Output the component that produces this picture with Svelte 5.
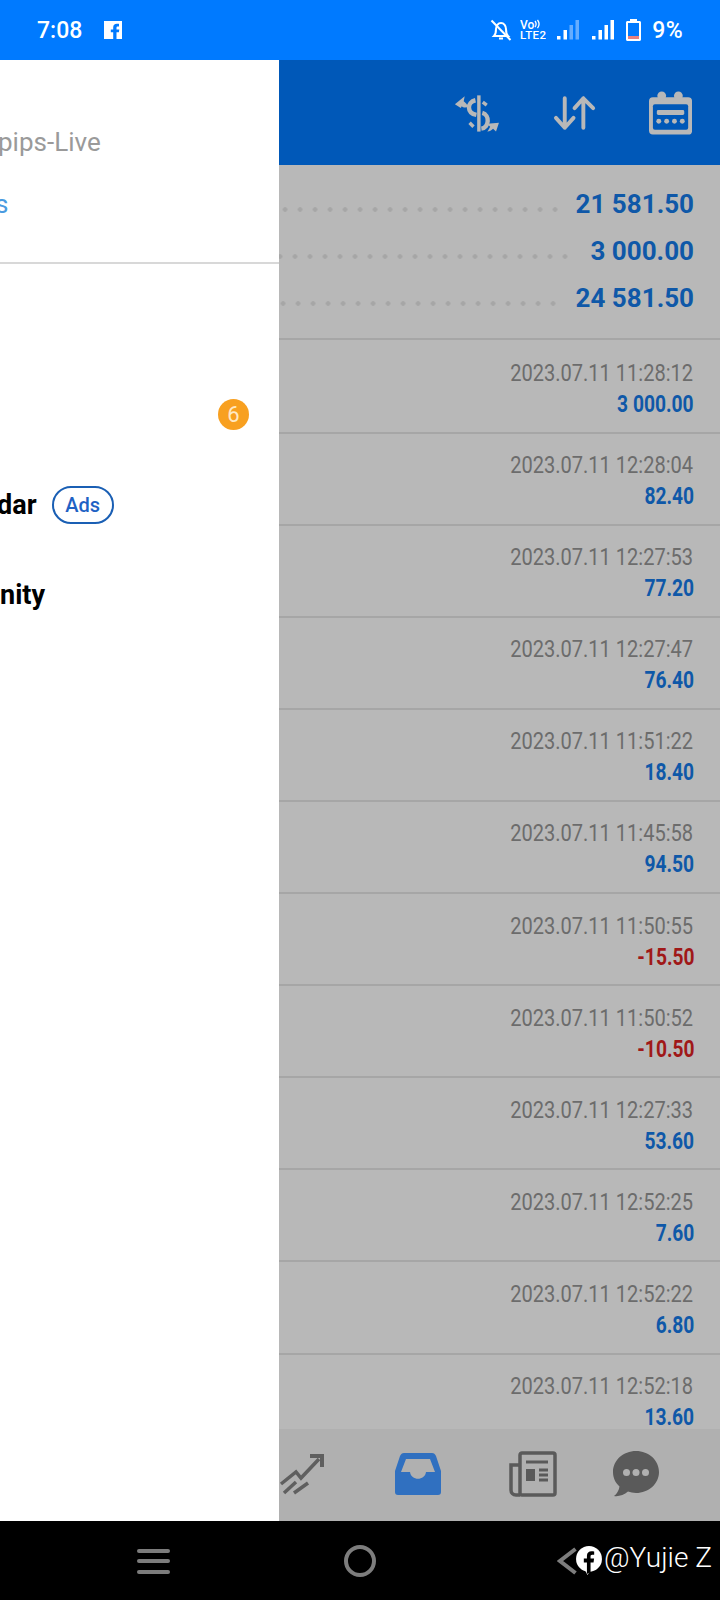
<script lang="ts">
	const summary = [
		{ value: "21 581.50", gap: 13 },
		{ value: "3 000.00", gap: 18 },
		{ value: "24 581.50", gap: 15 }
	];

	const deals = [
		{ time: "2023.07.11 11:28:12", amount: "3 000.00" },
		{ time: "2023.07.11 12:28:04", amount: "82.40" },
		{ time: "2023.07.11 12:27:53", amount: "77.20" },
		{ time: "2023.07.11 12:27:47", amount: "76.40" },
		{ time: "2023.07.11 11:51:22", amount: "18.40" },
		{ time: "2023.07.11 11:45:58", amount: "94.50" },
		{ time: "2023.07.11 11:50:55", amount: "-15.50", loss: true },
		{ time: "2023.07.11 11:50:52", amount: "-10.50", loss: true },
		{ time: "2023.07.11 12:27:33", amount: "53.60" },
		{ time: "2023.07.11 12:52:25", amount: "7.60" },
		{ time: "2023.07.11 12:52:22", amount: "6.80" },
		{ time: "2023.07.11 12:52:18", amount: "13.60" }
	];
</script>

<div class="screen">
	<header class="status">
		<span class="clock">7:08</span>
		<svg class="fb-square" width="18" height="18" viewBox="0 0 18 18">
			<path fill="#fff" d="M0 0h18v18h-5.500v-6.800h2.400l.4-2.800h-2.800V6.700c0-.8.3-1.300 1.400-1.300H15V2.900c-.3 0-1.200-.1-2.200-.1-2.200 0-3.600 1.300-3.600 3.700v1.900H6.800v2.800h2.400V18H0z" />
		</svg>
		<span class="spacer"></span>
		<svg width="22" height="22" viewBox="0 0 22 22" fill="none" stroke="#fff" stroke-width="2">
			<path d="M4 17c2-2 2-4 2-7 0-3 2-6 5-6s5 3 5 6c0 3 0 5 2 7z" />
			<path d="M9 19.500h4" />
			<path d="M1.500 1.500 20.500 21" />
		</svg>
		<svg class="volte" width="26" height="22" viewBox="0 0 26 22">
			<text x="0" y="9.500" class="volte-top">Vo</text>
			<path d="M15 2a5 5 0 0 1 0 6M17.500 .8a7 7 0 0 1 0 8.400" fill="none" stroke="#fff" stroke-width="1.300" />
			<text x="0" y="20" class="volte-bottom">LTE2</text>
		</svg>
		<svg class="sig-a" width="22" height="20" viewBox="0 0 22 20">
			<rect x="0" y="16" width="3.500" height="3.500" fill="#fff" />
			<rect x="6.500" y="10" width="3.500" height="9.500" fill="#fff" />
			<rect x="12.500" y="5" width="3.500" height="14.500" fill="#66adff" />
			<rect x="18.500" y="0" width="3.500" height="19.500" fill="#66adff" />
		</svg>
		<svg class="sig-b" width="22" height="20" viewBox="0 0 22 20" fill="#fff">
			<rect x="0" y="16" width="3.500" height="3.500" />
			<rect x="6.500" y="10" width="3.500" height="9.500" />
			<rect x="12.500" y="5" width="3.500" height="14.500" />
			<rect x="18.500" y="0" width="3.500" height="19.500" />
		</svg>
		<svg class="battery" width="15" height="22" viewBox="0 0 15 22">
			<path fill="#fff" d="M4 0h7v2h2.500c.8 0 1.500.7 1.500 1.500v17c0 .8-.7 1.500-1.500 1.500h-12C.7 22 0 21.300 0 20.500v-17C0 2.700.7 2 1.500 2H4z" />
			<rect x="2" y="4" width="11" height="13" fill="#007aff" />
			<rect x="2" y="17" width="11" height="3" fill="#e88080" />
		</svg>
		<span class="percent">9%</span>
	</header>

	<div class="body">
		<aside class="drawer">
			<div class="account">
				<div class="server">pips-Live</div>
				<div class="link">s</div>
			</div>
			<nav class="menu">
				<div class="item badge-row"><span class="badge">6</span></div>
				<div class="item">
					<span class="label">dar</span>
					<span class="ads">Ads</span>
				</div>
				<div class="item"><span class="label wide">nity</span></div>
			</nav>
		</aside>

		<main class="page">
			<div class="toolbar">
				<svg class="tool-a" width="56" height="50" viewBox="0 0 56 50" fill="none" stroke="#b8b8b8">
					<path d="M29.500 8v37" stroke-width="3.500" />
					<path d="M26 13c-9 2-9 13 1 15" stroke-width="4.500" />
					<path d="M33.500 15l4 3" stroke-width="3.500" />
					<path d="M33 26c8 2 7 15-1 16" stroke-width="4.500" />
					<path d="M20 36l4 4" stroke-width="3.500" />
					<path fill="#b8b8b8" stroke="none" d="M5 17 15 9l-1 5c2 2 4 3 4 6-3 1-5 0-6-1l-1 2z" />
					<path fill="#b8b8b8" stroke="none" d="M50 36l-12 1 3 3c-1 2-2 4-3 5 3 0 5-2 6-3l3 3z" />
				</svg>
				<svg class="tool-b" width="44" height="36" viewBox="0 0 44 36" fill="none" stroke="#b8b8b8" stroke-width="4" stroke-linecap="round" stroke-linejoin="round">
					<path d="M12 3v30M3 23l9 10 9-10" />
					<path d="M31 33V3M22 13l9-10 10 10" />
				</svg>
				<svg class="tool-c" width="44" height="44" viewBox="0 0 44 44">
					<rect x="0" y="6" width="44" height="38" rx="4" fill="#b8b8b8" />
					<rect x="4" y="13" width="36" height="26" rx="2" fill="#0058b8" />
					<circle cx="13" cy="4.500" r="4.500" fill="#b8b8b8" />
					<circle cx="30" cy="4.500" r="4.500" fill="#b8b8b8" />
					<rect x="8" y="19" width="28" height="5" rx="1.500" fill="#b8b8b8" />
					<circle cx="10" cy="30.500" r="2.500" fill="#b8b8b8" />
					<circle cx="18" cy="30.500" r="2.500" fill="#b8b8b8" />
					<circle cx="26" cy="30.500" r="2.500" fill="#b8b8b8" />
					<circle cx="34" cy="30.500" r="2.500" fill="#b8b8b8" />
				</svg>
			</div>

			<section class="summary">
				{#each summary as line}
					<div class="sum-line">
						<span class="dots"></span>
						<span class="sum-value" style="margin-left: {line.gap}px">{line.value}</span>
					</div>
				{/each}
			</section>

			<section class="deals">
				{#each deals as deal}
					<div class="deal">
						<span class="time">{deal.time}</span>
						<span class="amount" class:loss={deal.loss}>{deal.amount}</span>
					</div>
				{/each}
			</section>

			<footer class="tabs">
				<svg class="tab-chart" width="56" height="56" viewBox="0 0 56 56" fill="none" stroke="#5f5f5f" stroke-width="3.500">
					<path d="M5 38 20 26l5 6 18-19" />
					<path d="M34 10h12v11" stroke-width="4" />
					<path d="M8 47l12-11M18 47l14-10" />
				</svg>
				<svg class="tab-inbox" width="46" height="42" viewBox="0 0 46 42">
					<path fill="#3070c0" fill-rule="evenodd" d="M9 0h28c2 0 3 1 4 3l5 15v21c0 2-1 3-3 3H3c-2 0-3-1-3-3V18L5 3c1-2 2-3 4-3zm2 6L6 19h9c1 9 15 9 16 0h9L35 6z" />
				</svg>
				<svg class="tab-news" width="48" height="46" viewBox="0 0 48 46" fill="none" stroke="#5a5a5a" stroke-width="3.500">
					<rect x="11" y="2" width="35" height="42" rx="2" />
					<path d="M11 44H7c-3 0-5-2-5-5V14h8" />
					<path d="M17 11h22" stroke-width="3" />
					<rect x="18" y="19" width="7" height="10" fill="#5a5a5a" stroke-width="2" />
					<path d="M30 19h9M30 24h9M30 29h9" stroke-width="3" />
				</svg>
				<svg class="tab-chat" width="46" height="46" viewBox="0 0 46 46">
					<path fill="#5a5a5a" d="M23 0c12.700 0 23 9.300 23 21s-10.300 21-23 21c-3 0-5.500-.5-8-1.400C11 44 5 46 1 45c3-2 5-6 5.500-9.500C2.500 32 0 27 0 21 0 9.300 10.300 0 23 0z" />
					<circle cx="13.500" cy="21.500" r="3.500" fill="#b0b0b0" />
					<circle cx="23" cy="21.500" r="3.500" fill="#b0b0b0" />
					<circle cx="32.500" cy="21.500" r="3.500" fill="#b0b0b0" />
				</svg>
			</footer>
		</main>
	</div>

	<footer class="nav">
		<span class="burger"><i></i><i></i><i></i></span>
		<span class="home"></span>
		<svg class="back" width="20" height="28" viewBox="0 0 20 28" fill="none" stroke="#7d7d7d" stroke-width="4">
			<path d="M18.500 2 3 14l15.500 12" />
		</svg>
		<svg class="fb-round" width="26" height="29" viewBox="0 0 25 28">
			<circle cx="12.500" cy="12.500" r="12.500" fill="#fff" />
			<path fill="#fff" d="M8 22l3 6 4-6z" />
			<path fill="#000" d="M10.500 27v-11H7.500v-4h3V9.500c0-3 1.800-4.500 4.400-4.500 1.200 0 2.200.1 2.600.2v3.300h-1.900c-1.300 0-1.600.7-1.600 1.600V12h3.400l-.5 4h-2.900v9z" />
		</svg>
		<span class="credit">@Yujie Z</span>
	</footer>
</div>

<style>
	:global(body) {
		margin: 0;
	}

	.screen {
		width: 720px;
		height: 1600px;
		display: flex;
		flex-direction: column;
		overflow: hidden;
		font-family: Roboto, "Liberation Sans", sans-serif;
		background: #b8b8b8;
	}

	.status {
		height: 60px;
		flex: none;
		display: flex;
		align-items: center;
		padding: 0 37px 0 37px;
		background: #007aff;
		color: #fff;
		font-size: 23px;
		font-weight: 500;
	}

	.fb-square {
		margin-left: 22px;
		margin-bottom: 1px;
	}

	.spacer {
		flex: 1;
	}

	.volte {
		margin-left: 8px;
	}

	.volte-top {
		font: 500 12px Roboto, sans-serif;
		fill: #fff;
	}

	.volte-bottom {
		font: 500 11.500px Roboto, sans-serif;
		letter-spacing: 0.4px;
		fill: #fff;
	}

	.sig-a {
		margin-left: 11px;
	}

	.sig-b {
		margin-left: 13px;
	}

	.battery {
		margin-left: 12px;
	}

	.percent {
		margin-left: 11px;
		letter-spacing: 0.4px;
	}

	.body {
		flex: 1;
		display: flex;
		min-height: 0;
	}

	.drawer {
		width: 279px;
		flex: none;
		background: #fff;
		overflow: hidden;
	}

	.account {
		height: 204px;
		box-sizing: border-box;
		padding-top: 65px;
		border-bottom: 2px solid #d8d8d8;
		font-size: 26px;
		line-height: 34px;
	}

	.server {
		color: #9a9a9a;
		margin-left: -2px;
	}

	.link {
		color: #4a9be0;
		margin-top: 28px;
		margin-left: -5px;
	}

	.menu {
		padding-top: 105px;
	}

	.item {
		height: 90.500px;
		display: flex;
		align-items: center;
	}

	.badge-row {
		justify-content: flex-end;
		padding-right: 30px;
	}

	.badge {
		width: 31px;
		height: 31px;
		border-radius: 50%;
		background: #f8a020;
		color: #ffe9c4;
		font-size: 22px;
		line-height: 31px;
		text-align: center;
	}

	.label {
		font-size: 27px;
		font-weight: 700;
		color: #000;
		margin-left: -3px;
	}

	.wide {
		margin-left: 0;
	}

	.ads {
		box-sizing: border-box;
		height: 38px;
		width: 62px;
		margin-left: 15px;
		border: 2px solid #1a5fb4;
		border-radius: 19px;
		color: #1f62c4;
		font-size: 20px;
		font-weight: 500;
		line-height: 34px;
		text-align: center;
	}

	.page {
		flex: 1;
		min-width: 0;
		display: flex;
		flex-direction: column;
	}

	.toolbar {
		height: 105px;
		flex: none;
		display: flex;
		align-items: center;
		padding-right: 28px;
		background: #0058b8;
	}

	.tool-a {
		margin-left: 171px;
		margin-bottom: 1px;
	}

	.tool-b {
		margin-left: 48px;
	}

	.tool-c {
		margin-left: 53px;
	}

	.summary {
		height: 175px;
		flex: none;
		box-sizing: border-box;
		padding: 15px 26px 0 0;
		border-bottom: 2px solid #a6a6a6;
	}

	.sum-line {
		height: 47px;
		display: flex;
		align-items: center;
	}

	.dots {
		flex: 1;
		height: 5px;
		margin-top: 11px;
		background: radial-gradient(circle, #a6a6a6 2px, transparent 2.500px) right center / 15px 5px repeat-x;
	}

	.sum-value {
		font-size: 26px;
		font-weight: 700;
		color: #0f58a8;
	}

	.deals {
		flex: 1;
		min-height: 0;
		overflow: hidden;
	}

	.deal {
		height: 92.100px;
		box-sizing: border-box;
		padding: 14.500px 26px 0 0;
		border-bottom: 2px solid #a6a6a6;
		display: flex;
		flex-direction: column;
		align-items: flex-end;
	}

	.deal:first-child {
		height: 93.600px;
		padding-top: 16px;
	}

	.time {
		font-size: 24px;
		line-height: 34px;
		margin-right: 0.500px;
		color: #6c6c6c;
		transform: scaleX(0.835);
		transform-origin: right center;
	}

	.amount {
		font-size: 24px;
		line-height: 28px;
		font-weight: 700;
		color: #0f58a8;
		transform: scaleX(0.8);
		transform-origin: right center;
	}

	.loss {
		color: #a01818;
	}

	.tabs {
		height: 92px;
		flex: none;
		box-sizing: border-box;
		padding-bottom: 2px;
		display: flex;
		align-items: center;
		background: #b0b0b0;
	}

	.tab-chart {
		margin-left: -3px;
	}

	.tab-inbox {
		margin-left: 63px;
	}

	.tab-news {
		margin-left: 68px;
	}

	.tab-chat {
		margin-left: 56px;
	}

	.nav {
		height: 79px;
		flex: none;
		display: flex;
		align-items: center;
		background: #000;
		color: #fff;
	}

	.burger {
		width: 33px;
		margin-left: 137px;
		display: flex;
		flex-direction: column;
		gap: 6.500px;
		margin-top: 1px;
	}

	.burger i {
		height: 4px;
		border-radius: 2px;
		background: #7c7c7c;
	}

	.home {
		box-sizing: border-box;
		width: 32px;
		height: 32px;
		margin-left: 174px;
		border: 4px solid #7d7d7d;
		border-radius: 50%;
	}

	.back {
		margin-left: 181px;
	}

	.fb-round {
		margin-left: -1px;
		margin-bottom: 1px;
	}

	.credit {
		margin-left: 2px;
		margin-bottom: 6px;
		font-size: 28px;
		font-weight: 300;
		white-space: nowrap;
	}
</style>
